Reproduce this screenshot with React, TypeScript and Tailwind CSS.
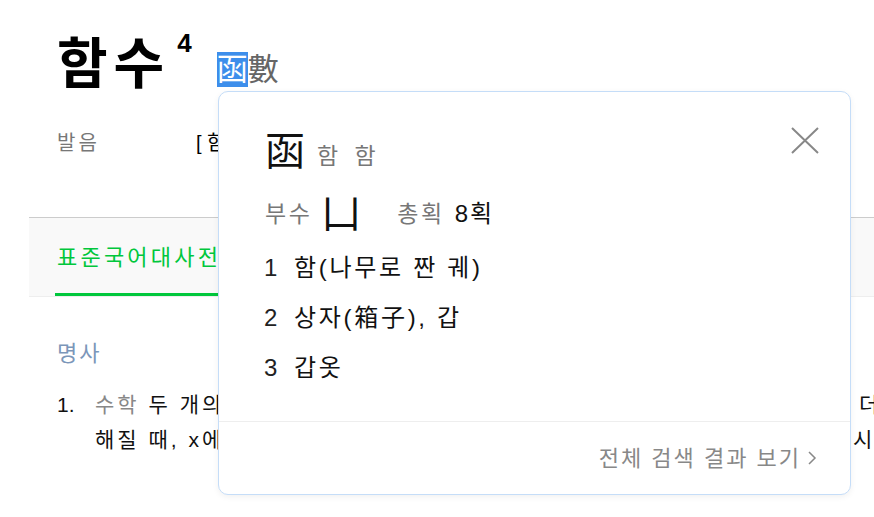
import React from "react";

const F = { fontFamily: '"Liberation Sans", "Noto Sans CJK KR", sans-serif' };

export default function App() {
  return (
    <div className="relative w-[874px] h-[517px] overflow-hidden bg-white text-[#111]" style={F}>
      <div className="pl-[29px]">
        {/* header */}
        <div className="pl-[28px] pt-[28px] flex items-start h-[117px]">
          <h1 className="text-[55px] leading-[72px] font-bold text-black tracking-[6px]">함수</h1>
          <span className="ml-[7px] mt-[2px] text-[26px] font-bold leading-none text-black">4</span>
          <div className="ml-[25px] mt-[24px] flex text-[31px] leading-[35px] text-[#666]">
            <span className="bg-[#3d8eeb] text-white">函</span>
            <span>數</span>
          </div>
        </div>
        <div className="pl-[28px] flex items-center h-[52px] text-[20px]">
          <span className="w-[139px] text-[#777] tracking-[3px]">발음</span>
          <span className="text-black">[ 함수 ]</span>
        </div>
        {/* tabs */}
        <div className="mt-[48px] h-[80px] bg-[#f9f9f9] border-t border-[#cccccc] border-b border-b-[#eeeeee] flex items-end">
          <div className="ml-[26px] flex flex-col">
            <span className="text-[#00c73c] text-[22px] leading-[24px] pl-[2px] mb-[23px] tracking-[3.2px] whitespace-nowrap">표준국어대사전</span>
            <div className="h-[3px] w-[300px] bg-[#00c73c]" />
          </div>
        </div>
        {/* body */}
        <div className="pl-[28px] pt-[43px]">
          <div className="text-[#7b96b9] text-[22px] leading-[28px] tracking-[2px]">명사</div>
          <div className="mt-[19px] flex text-[21px] leading-[35px]">
            <span className="w-[38px] shrink-0">1.</span>
            <div className="tracking-[3px] whitespace-nowrap">
              <div className="flex">
                <div className="w-[756px] overflow-hidden shrink-0"><span className="text-[#888]">수학</span> 두 개의 변수 x, y 사이에서, x의 값이 정해지면</div>
                <span className="ml-[8px]">더하여</span>
              </div>
              <div className="flex">
                <div className="w-[756px] overflow-hidden shrink-0">해질 때, x에 대하여 y를 이르는 말. y가 x의 함수</div>
                <span className="ml-[2px]">시한다</span>
              </div>
            </div>
          </div>
        </div>
      </div>

      {/* popup */}
      <div className="absolute left-[218px] top-[91px] w-[633px] h-[404px] bg-white border border-[#c5ddf8] rounded-[10px] shadow-[0_2px_6px_rgba(0,0,0,0.06)] flex flex-col">
        <div className="flex-1 pl-[46px] pt-[37px] relative">
          <svg className="absolute right-[31px] top-[35px]" width="28" height="27" viewBox="0 0 28 27">
            <path d="M1 1 L27 26 M27 1 L1 26" stroke="#888" strokeWidth="2" fill="none" />
          </svg>
          <div className="flex items-center h-[44px]">
            <span className="text-[40px] leading-[44px] text-[#111]">函</span>
            <span className="ml-[12px] mt-[10px] text-[23px] leading-[30px] text-[#777] tracking-[5px]">함 함</span>
          </div>
          <div className="mt-[21px] h-[40px] flex items-center">
            <span className="text-[23px] text-[#777] tracking-[2.5px]">부수</span>
            <span className="ml-[9px] text-[40px] leading-[40px] text-[#111]">凵</span>
            <span className="ml-[36px] text-[23px] text-[#777] tracking-[2.5px]">총획</span>
            <span className="ml-[10px] text-[24px] text-[#111] tracking-[2px]">8획</span>
          </div>
          <div className="mt-[9px] flex flex-col text-[24px] leading-[50px]">
            <div className="flex"><span className="w-[30px] -ml-[1px] text-[#222]">1</span><span className="tracking-[2.7px]">함(나무로 짠 궤)</span></div>
            <div className="flex"><span className="w-[30px] -ml-[1px] text-[#222]">2</span><span className="tracking-[2.7px]">상자(箱子), 갑</span></div>
            <div className="flex"><span className="w-[30px] -ml-[1px] text-[#222]">3</span><span className="tracking-[2.7px]">갑옷</span></div>
          </div>
        </div>
        <div className="h-[73px] border-t border-[#eeeeee] flex items-center justify-end pr-[33px] text-[22px] text-[#888]">
          <span className="tracking-[2px]">전체 검색 결과 보기</span>
          <svg className="ml-[6px]" width="10" height="16" viewBox="0 0 10 16">
            <path d="M2 2 L8 8 L2 14" stroke="#888" strokeWidth="1.5" fill="none" />
          </svg>
        </div>
      </div>
    </div>
  );
}
